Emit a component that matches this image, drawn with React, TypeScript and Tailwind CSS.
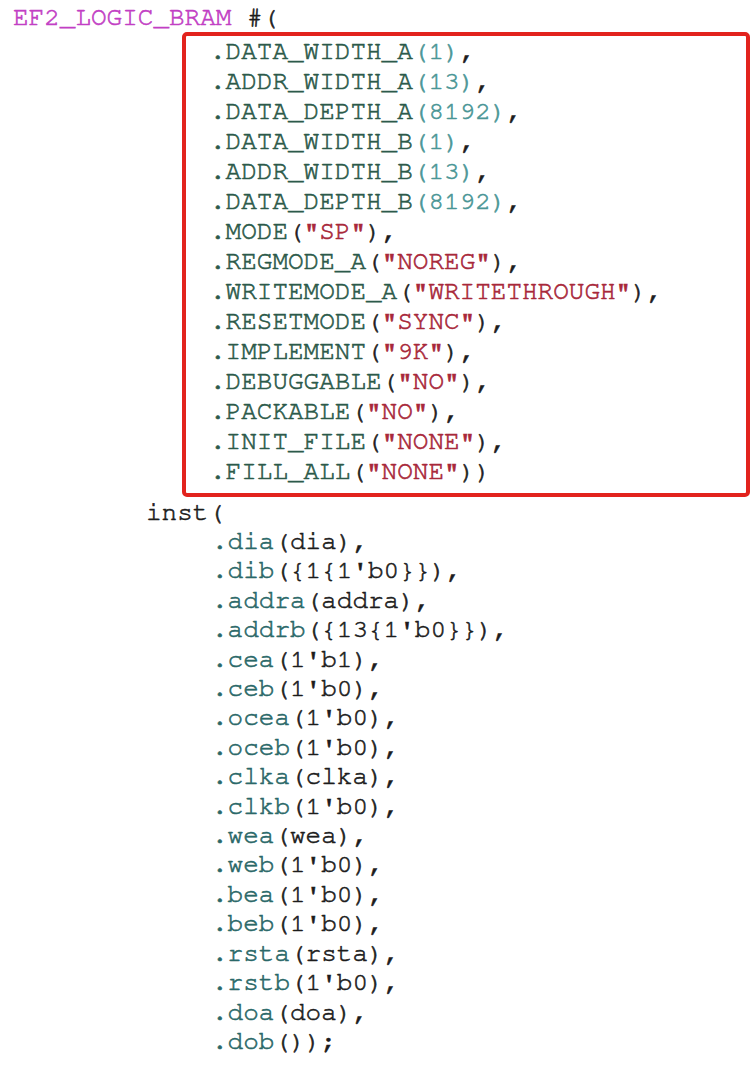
import React from 'react';

type Seg = [string, string];

const C = {
  mod: 'text-[#c23fc4]',
  name: 'text-[#2c5a4a]',
  num: 'text-[#4a9696]',
  str: 'text-[#a8283a]',
  pun: 'text-[#1c1c1c]',
  port: 'text-[#2a6868]',
};

const params: Seg[][] = [
  [['.DATA_WIDTH_A', C.name], ['(1)', C.num], [',', C.pun]],
  [['.ADDR_WIDTH_A', C.name], ['(13)', C.num], [',', C.pun]],
  [['.DATA_DEPTH_A', C.name], ['(8192)', C.num], [',', C.pun]],
  [['.DATA_WIDTH_B', C.name], ['(1)', C.num], [',', C.pun]],
  [['.ADDR_WIDTH_B', C.name], ['(13)', C.num], [',', C.pun]],
  [['.DATA_DEPTH_B', C.name], ['(8192)', C.num], [',', C.pun]],
  [['.MODE', C.name], ['(', C.pun], ['"SP"', C.str], ['),', C.pun]],
  [['.REGMODE_A', C.name], ['(', C.pun], ['"NOREG"', C.str], ['),', C.pun]],
  [['.WRITEMODE_A', C.name], ['(', C.pun], ['"WRITETHROUGH"', C.str], ['),', C.pun]],
  [['.RESETMODE', C.name], ['(', C.pun], ['"SYNC"', C.str], ['),', C.pun]],
  [['.IMPLEMENT', C.name], ['(', C.pun], ['"9K"', C.str], ['),', C.pun]],
  [['.DEBUGGABLE', C.name], ['(', C.pun], ['"NO"', C.str], ['),', C.pun]],
  [['.PACKABLE', C.name], ['(', C.pun], ['"NO"', C.str], ['),', C.pun]],
  [['.INIT_FILE', C.name], ['(', C.pun], ['"NONE"', C.str], ['),', C.pun]],
  [['.FILL_ALL', C.name], ['(', C.pun], ['"NONE"', C.str], ['))', C.pun]],
];

const ports: [string, string, string][] = [
  ['dia', '(dia)', ','],
  ['dib', "({1{1'b0}})", ','],
  ['addra', '(addra)', ','],
  ['addrb', "({13{1'b0}})", ','],
  ['cea', "(1'b1)", ','],
  ['ceb', "(1'b0)", ','],
  ['ocea', "(1'b0)", ','],
  ['oceb', "(1'b0)", ','],
  ['clka', '(clka)', ','],
  ['clkb', "(1'b0)", ','],
  ['wea', '(wea)', ','],
  ['web', "(1'b0)", ','],
  ['bea', "(1'b0)", ','],
  ['beb', "(1'b0)", ','],
  ['rsta', '(rsta)', ','],
  ['rstb', "(1'b0)", ','],
  ['doa', '(doa)', ','],
  ['dob', '()', ');'],
];

const Line = ({ segs }: { segs: Seg[] }) => (
  <div className="whitespace-pre">
    {segs.map(([text, cls], i) => (
      <span key={i} className={cls}>
        {text}
      </span>
    ))}
  </div>
);

export default function App() {
  return (
    <div
      className="w-[754px] h-[1084px] overflow-hidden bg-white pt-[2px] text-[26px] [-webkit-text-stroke:0.6px_currentColor]"
      style={{ fontFamily: '"Nimbus Mono PS", "Nimbus Mono L", FreeMono, Courier, "Liberation Mono", monospace' }}
    >
      <div className="leading-[30px] pl-[13px] whitespace-pre">
        <span className={C.mod}>EF2_LOGIC_BRAM</span>
        <span className={C.pun}> #(</span>
      </div>

      {/* parameter block, highlighted */}
      <div className="ml-[182px] w-[568px] border-4 border-[#e2231d] rounded-[5px] pl-[24px] pb-[7px] leading-[30px]">
        {params.map((segs, i) => (
          <Line key={i} segs={segs} />
        ))}
      </div>

      <div className="pl-[146px] leading-[30px] text-[#1c1c1c] whitespace-pre">inst(</div>

      <div className="pl-[212px] leading-[29.4px]">
        {ports.map(([name, arg, end]) => (
          <Line
            key={name}
            segs={[
              ['.' + name, C.port],
              [arg, C.pun],
              [end, C.pun],
            ]}
          />
        ))}
      </div>
    </div>
  );
}
